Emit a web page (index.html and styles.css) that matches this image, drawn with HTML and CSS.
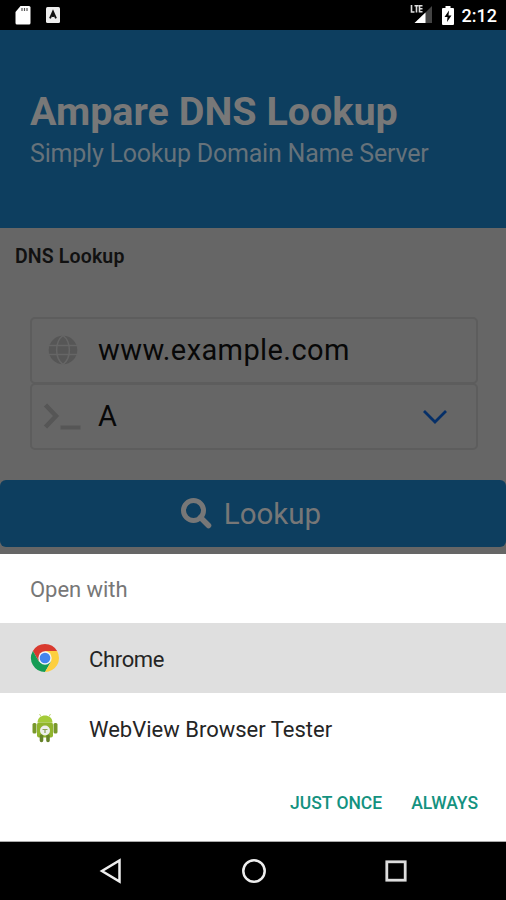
FILE: index.html
```html
<!DOCTYPE html>
<html lang="en">
<head>
<meta charset="utf-8">
<title>Ampare DNS Lookup</title>
<link rel="stylesheet" href="styles.css">
</head>
<body>
<div class="phone">
  <header class="status">
    <svg class="sd" width="16" height="19" viewBox="0 0 16 19"><path d="M5.500 0H14q1.500 0 1.500 1.500V17q0 1.500-1.500 1.500H2Q.5 18.500.5 17V6z" fill="#fff"/><path d="M7 2v3M9.500 2v3M12 2v3" stroke="#555" stroke-width="1.200"/></svg>
    <svg class="adb" width="14" height="16" viewBox="0 0 14 16"><rect width="14" height="16" rx="1.500" fill="#eee"/><path d="M4 11.300 7 4.500l3 6.800M7 7v3" fill="none" stroke="#111" stroke-width="1.900"/></svg>
    <svg class="signal" width="23" height="20" viewBox="0 0 23 20"><path d="M22 2v17H5z" fill="#444"/><path d="M15.500 8.500V19H4.500z" fill="#fff"/><path d="M1.500 1v7h3M4.500 1.700h4M6.500 1.700V8.500M12.500 1.700h-3v6h3M9.500 4.700h3" fill="none" stroke="#ddd" stroke-width="1.600"/></svg>
    <svg class="battery" width="12" height="19" viewBox="0 0 12 19"><path d="M3.500 0h5v2H11q1 0 1 1v15q0 1-1 1H1q-1 0-1-1V3q0-1 1-1h2.500z" fill="#fff"/><path d="M7 4.500 2.500 11H5.500L5 16l4.500-6.500h-3z" fill="#000"/></svg>
    <span class="clock">2:12</span>
  </header>
  <section class="hero">
    <h1>Ampare DNS Lookup</h1>
    <p>Simply Lookup Domain Name Server</p>
  </section>
  <main class="page">
    <h2>DNS Lookup</h2>
    <div class="fields">
      <div class="field">
        <svg class="globe" width="30" height="30" viewBox="0 0 30 30"><circle cx="15" cy="15" r="14.300" fill="#565656"/><path d="M0 10.500h30M0 19.500h30M15 .5C6.500 7 6.500 23 15 29.500M15 .5c8.500 6.500 8.500 22.500 0 29" fill="none" stroke="#666" stroke-width="1.500"/></svg>
        <span class="host">www.example.com</span>
      </div>
      <div class="field">
        <svg class="prompt" width="38" height="28" viewBox="0 0 38 28"><path d="m2.500 3 10.500 11L2.500 25" fill="none" stroke="#565656" stroke-width="4.500"/><path d="M17.500 25.500h20" stroke="#565656" stroke-width="4"/></svg>
        <span class="record">A</span>
        <svg class="chevron" width="26" height="18" viewBox="0 0 26 18"><path d="m2 4 11 11L24 4" fill="none" stroke="#052f68" stroke-width="2.800"/></svg>
      </div>
    </div>
    <div class="lookup">
      <svg width="31" height="31" viewBox="0 0 31 31"><circle cx="12.500" cy="12.500" r="10" fill="none" stroke="#777" stroke-width="5"/><path d="m19.500 19.500 8 8" stroke="#777" stroke-width="5.500" stroke-linecap="round"/></svg>
      <span>Lookup</span>
    </div>
  </main>
  <section class="sheet">
    <div class="sheet-title"><span>Open with</span></div>
    <div class="app selected">
      <svg width="30" height="30" viewBox="0 0 30 30"><path d="M2.870 8A14 14 0 0 1 27.120 8L15 8.500 9 18.500z" fill="#d93a2f"/><path d="M2.870 8A14 14 0 0 0 15 29L21.060 18.500 8.940 18.500z" fill="#159c55"/><path d="M27.120 8A14 14 0 0 1 15 29L21.060 18.500 15 8z" fill="#fdcf40"/><circle cx="15" cy="15" r="6.700" fill="#f5f5f5"/><circle cx="15" cy="15" r="5.300" fill="#4384ee"/></svg>
      <span class="chrome">Chrome</span>
    </div>
    <div class="app">
      <svg width="30" height="30" viewBox="0 0 30 30"><g fill="#91b52c"><path d="M7.500 9.500c0-9.500 15-9.500 15 0z" fill="#a4cb38"/><rect x="7" y="9.500" width="16" height="15" rx="2"/><rect x="2.500" y="10" width="4" height="10.500" rx="1.500" fill="#78982b"/><rect x="23.500" y="10" width="4" height="10.500" rx="1.500" fill="#78982b"/></g><path d="M11.500 23v4.500M18 23v4.500" stroke="#66822a" stroke-width="3.600" stroke-linecap="round"/><path d="m9.500 1 1.500 2.500M20.500 1 19 3.500" stroke="#c0d97a"/><circle cx="15" cy="17.500" r="5" fill="#eee"/><path d="M12.500 16.500h5M15 16.500v3.500" stroke="#8ba552" stroke-width="1.200"/></svg>
      <span class="tester">WebView Browser Tester</span>
    </div>
    <div class="actions"><span class="once">JUST ONCE</span><span class="always">ALWAYS</span></div>
  </section>
  <nav class="navbar">
    <svg width="24" height="26" viewBox="0 0 24 26"><path d="M20.500 2.500v21L3 13z" fill="none" stroke="#eee" stroke-width="2.500"/></svg>
    <svg width="26" height="26" viewBox="0 0 26 26"><circle cx="13" cy="13" r="10.700" fill="none" stroke="#eee" stroke-width="2.500"/></svg>
    <svg width="22" height="22" viewBox="0 0 22 22"><rect x="1.800" y="1.800" width="18.400" height="18.400" fill="none" stroke="#ddd" stroke-width="2.800"/></svg>
  </nav>
</div>
</body>
</html>
```
FILE: styles.css
```css
* { box-sizing: border-box; }
body { margin: 0; font-family: Roboto, "Liberation Sans", sans-serif; background: #000; }
h1, h2, p { margin: 0; }
svg { display: block; flex: none; }
span { white-space: nowrap; }
.phone { width: 506px; height: 900px; display: flex; flex-direction: column; overflow: hidden; }
.status { height: 30px; background: #000; display: flex; align-items: center; padding: 0 9px 0 15px; }
.adb { margin-left: 15px; }
.signal { margin-left: auto; margin-top: -2px; }
.battery { margin-left: 9px; }
.clock { margin-left: 8px; color: #fff; font-size: 18px; font-weight: 500; line-height: 30px; margin-top: 2px; }
.hero { height: 198px; background: #0d3e5f; color: #787878; padding: 58px 30px 0; }
.hero h1 { font-size: 39.500px; line-height: 48px; font-weight: 700; white-space: nowrap; }
.hero p { font-size: 25px; letter-spacing: -0.21px; line-height: 36px; color: #66727a; white-space: nowrap; }
.page { height: 326px; background: #666; display: flex; flex-direction: column; }
.page h2 { font-size: 19.500px; letter-spacing: 0.15px; line-height: 24px; font-weight: 600; color: #111; padding: 17px 15px 0; height: 89px; }
.fields { margin: 0 28px 0 30px; }
.field { height: 67px; border: 2px solid #5d5d5d; border-radius: 5px; display: flex; align-items: center; color: #080808; font-size: 29px; padding-bottom: 1px; }
.field + .field { margin-top: -1px; }
.globe { margin: 0 20px 0 16px; }
.host { letter-spacing: 0.4px; }
.prompt { margin: 0 17px 0 11px; }
.chevron { margin-left: auto; margin-right: 28px; }
.lookup { height: 67px; margin-top: 30px; background: #0d3e5f; color: #777; border-radius: 6px; display: flex; align-items: center; justify-content: center; gap: 12px; font-size: 29.500px; padding-right: 4px; }
.sheet { height: 288px; background: #fff; border-bottom: 1px solid #aaa; }
.sheet-title { height: 69px; padding: 2px 30px 0; display: flex; align-items: center; font-size: 22px; letter-spacing: -0.05px; color: #777; }
.app { height: 70px; padding: 0 30px; display: flex; align-items: center; gap: 29px; font-size: 22px; color: #252525; }
.app span { padding-top: 2px; }
.chrome { letter-spacing: -0.35px; }
.selected { background: #dfdfdf; }
.actions { height: 79px; padding: 0 28px; display: flex; align-items: center; justify-content: flex-end; gap: 29px; color: #149280; font-size: 17.500px; font-weight: 500; }
.navbar { height: 58px; background: #000; display: flex; align-items: center; justify-content: space-between; padding: 0 99px; }
```
